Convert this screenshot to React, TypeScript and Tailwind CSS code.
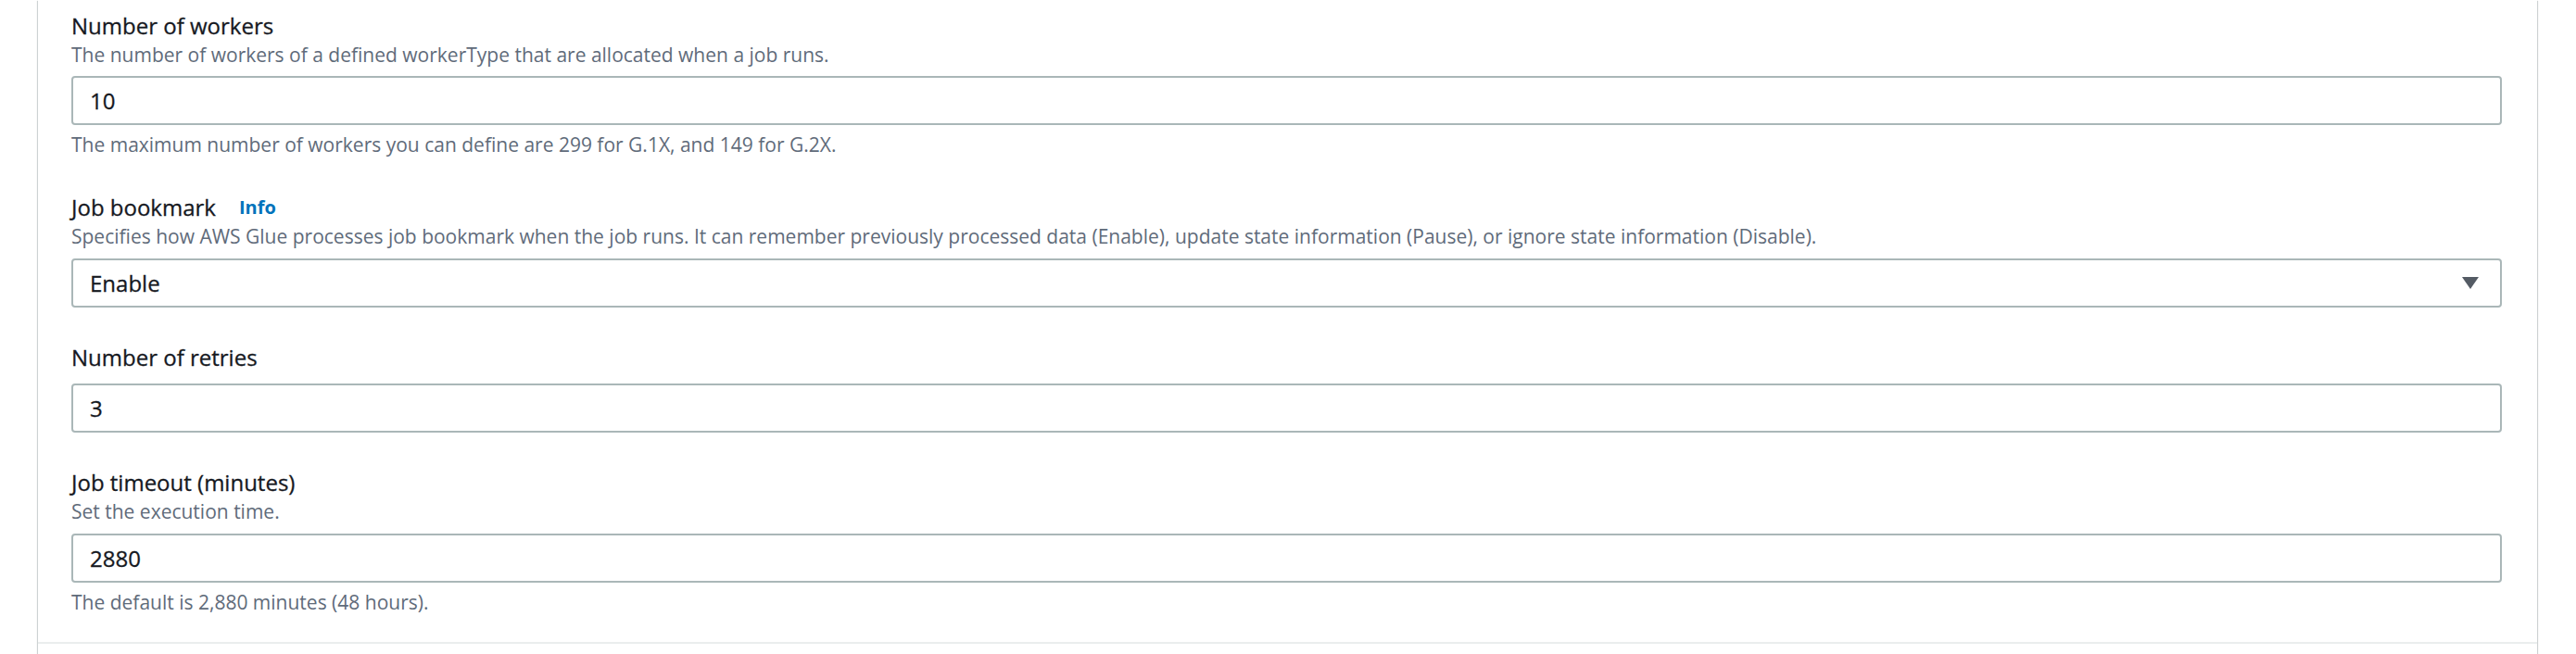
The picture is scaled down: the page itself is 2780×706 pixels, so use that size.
import React from 'react';

interface FieldProps {
  label: string;
  info?: boolean;
  description?: string;
  constraint?: string;
  className?: string;
  gap?: string;
  children: React.ReactNode;
}

const Field: React.FC<FieldProps> = ({ label, info, description, constraint, className, gap, children }) => (
  <div className={`flex flex-col ${className ?? ''}`}>
    <div className="flex items-center h-[34px]">
      <span className="text-[24px] leading-[34px] text-[#16191f] [-webkit-text-stroke:0.3px_#16191f]">{label}</span>
      {info && <span className="ml-[25px] text-[20px] font-bold text-[#0073bb] leading-[34px]">Info</span>}
    </div>
    {description && <p className="text-[21px] leading-[28px] text-[#5f6b7a]">{description}</p>}
    <div className={gap ?? 'mt-[12px]'}>{children}</div>
    {constraint && <p className="mt-[7px] text-[21px] leading-[28px] text-[#5f6b7a]">{constraint}</p>}
  </div>
);

const TextInput: React.FC<{ value: string }> = ({ value }) => (
  <div className="h-[53px] border-2 border-[#aab7b8] rounded-[4px] flex items-center px-[18px] text-[24px] text-[#16191f] [-webkit-text-stroke:0.3px_#16191f]">
    {value}
  </div>
);

const SelectBox: React.FC<{ value: string }> = ({ value }) => (
  <div className="h-[53px] border-2 border-[#aab7b8] rounded-[4px] flex items-center justify-between pl-[18px] pr-[23px] text-[24px] text-[#16191f] [-webkit-text-stroke:0.3px_#16191f]">
    <span>{value}</span>
    <svg width="18" height="13" viewBox="0 0 18 13">
      <path d="M0 0 H18 L9 13 Z" fill="#545b64" />
    </svg>
  </div>
);

export default function App() {
  return (
    <div className="w-[2780px] h-[706px] overflow-hidden bg-white font-['Open_Sans',sans-serif]">
      <div className="ml-[41px] w-[2697px] h-full bg-white flex flex-col shadow-[0_1px_1px_0_rgba(0,28,36,0.3),1px_1px_1px_0_rgba(0,28,36,0.15),-1px_1px_1px_0_rgba(0,28,36,0.15)]">
        <div className="pl-[36px] pr-[38px] pt-[11px] pb-[29px] flex flex-col">
          <Field
            gap="mt-[9px]"
            label="Number of workers"
            description="The number of workers of a defined workerType that are allocated when a job runs."
            constraint="The maximum number of workers you can define are 299 for G.1X, and 149 for G.2X."
          >
            <TextInput value="10" />
          </Field>

          <Field
            className="mt-[37px]"
            gap="mt-[10px]"
            label="Job bookmark"
            info
            description="Specifies how AWS Glue processes job bookmark when the job runs. It can remember previously processed data (Enable), update state information (Pause), or ignore state information (Disable)."
          >
            <SelectBox value="Enable" />
          </Field>

          <Field className="mt-[37px]" gap="mt-[11px]" label="Number of retries">
            <TextInput value="3" />
          </Field>

          <Field
            className="mt-[37px]"
            gap="mt-[10px]"
            label="Job timeout (minutes)"
            description="Set the execution time."
            constraint="The default is 2,880 minutes (48 hours)."
          >
            <TextInput value="2880" />
          </Field>
        </div>
        <div className="flex-1 border-t-2 border-[#eaeded]" />
      </div>
    </div>
  );
}
